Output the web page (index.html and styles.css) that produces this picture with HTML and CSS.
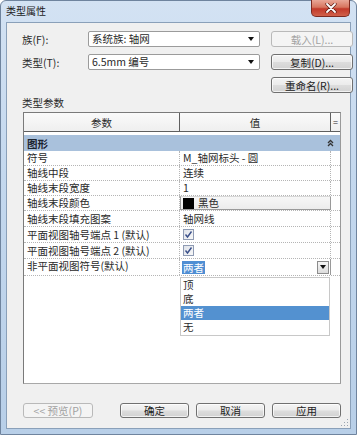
FILE: index.html
```html
<!DOCTYPE html>
<html lang="zh">
<head>
<meta charset="utf-8">
<title>类型属性</title>
<link rel="stylesheet" href="styles.css">
</head>
<body>
<div class="window">
  <div class="titlebar">
    <span class="title">类型属性</span>
    <div class="close">
      <svg width="14" height="10" viewBox="0 0 14 10"><path d="M3 1 L11 9 M11 1 L3 9" stroke="#5a1a12" stroke-width="3.2" stroke-linecap="round"/><path d="M3 1 L11 9 M11 1 L3 9" stroke="#ffffff" stroke-width="1.8" stroke-linecap="round"/></svg>
    </div>
  </div>
  <div class="client">
    <div class="top-grid">
      <span class="lbl">族(F):</span>
      <div class="combo"><span>系统族: 轴网</span><i class="tri"></i></div>
      <button class="btn disabled">载入(L)...</button>

      <span class="lbl">类型(T):</span>
      <div class="combo"><span>6.5mm 编号</span><i class="tri"></i></div>
      <button class="btn">复制(D)...</button>

      <span></span><span></span>
      <button class="btn">重命名(R)...</button>
    </div>

    <div class="section-label">类型参数</div>

    <div class="table">
      <div class="thead">
        <div class="th">参数</div>
        <div class="th">值</div>
        <div class="th eq">=</div>
      </div>
      <div class="tbody">
        <div class="group">
          <span>图形</span>
          <svg class="collapse" width="7" height="8" viewBox="0 0 7 8"><path d="M1 4 L3.5 1.5 L6 4 M1 7 L3.5 4.5 L6 7" stroke="#333" stroke-width="1.3" fill="none"/></svg>
        </div>
        <div class="row"><div class="c1">符号</div><div class="c2">M_轴网标头 - 圆</div><div class="c3"></div></div>
        <div class="row"><div class="c1">轴线中段</div><div class="c2">连续</div><div class="c3"></div></div>
        <div class="row"><div class="c1">轴线末段宽度</div><div class="c2">1</div><div class="c3"></div></div>
        <div class="row"><div class="c1">轴线末段颜色</div><div class="c2 colorcell"><i class="swatch"></i>黑色</div><div class="c3"></div></div>
        <div class="row r16"><div class="c1">轴线末段填充图案</div><div class="c2">轴网线</div><div class="c3"></div></div>
        <div class="row r16"><div class="c1">平面视图轴号端点 1 (默认)</div><div class="c2"><span class="check"><svg width="9" height="9" viewBox="0 0 9 9"><path d="M1.5 4.5 L3.5 7 L7.5 1.5" stroke="#3a4f8a" stroke-width="1.4" fill="none"/></svg></span></div><div class="c3"></div></div>
        <div class="row r16"><div class="c1">平面视图轴号端点 2 (默认)</div><div class="c2"><span class="check"><svg width="9" height="9" viewBox="0 0 9 9"><path d="M1.5 4.5 L3.5 7 L7.5 1.5" stroke="#3a4f8a" stroke-width="1.4" fill="none"/></svg></span></div><div class="c3"></div></div>
        <div class="row tall"><div class="c1">非平面视图符号(默认)</div><div class="c2 editcell"><span class="sel">两者</span><span class="dbtn"><i class="tri"></i></span></div><div class="c3"></div></div>
      </div>
      <ul class="dropdown">
        <li>顶</li>
        <li>底</li>
        <li class="hl">两者</li>
        <li>无</li>
      </ul>
    </div>

    <div class="footer">
      <button class="btn disabled preview">&lt;&lt; 预览(P)</button>
      <div class="actions">
        <button class="btn">确定</button>
        <button class="btn">取消</button>
        <button class="btn">应用</button>
      </div>
    </div>
    <div class="grip"></div>
  </div>
</div>
</body>
</html>
```

FILE: styles.css
```css
* { box-sizing: border-box; }
html, body { margin: 0; padding: 0; }
body {
  width: 357px;
  height: 435px;
  overflow: hidden;
  font-family: "Noto Sans CJK SC", "Liberation Sans", sans-serif;
  font-size: 10.5px;
  color: #2a2a2a;
  background: #fff;
}
.window {
  width: 357px;
  height: 435px;
  background: linear-gradient(180deg, #d3e2f3 0%, #c4d8ee 40%, #b8cfe8 100%);
  border: 1px solid #6f849e;
  border-radius: 6px 6px 0 0;
  position: relative;
  padding: 0 5px 0 5px;
}
.titlebar {
  height: 21px;
  display: flex;
  align-items: center;
  position: relative;
}
.title {
  font-size: 10px;
  color: #1b1b1b;
  margin-top: -2px;
}
.close {
  position: absolute;
  right: 1px;
  top: -1px;
  width: 39px;
  height: 17px;
  border: 1px solid #7d2a20;
  border-top: none;
  border-radius: 0 0 5px 5px;
  background: linear-gradient(180deg, #e9a797 0%, #d7755f 45%, #c2392a 55%, #d0614a 100%);
  display: flex;
  align-items: center;
  justify-content: center;
}
.client {
  height: 407px;
  background: #f0f0f0;
  border: 1px solid #8aa0b9;
  position: relative;
  padding: 8px 9px 0 15px;
}
.top-grid {
  display: grid;
  grid-template-columns: 55px 172px 82px;
  column-gap: 11px;
  grid-template-rows: 16px 16px 16px;
  row-gap: 7px;
  align-items: center;
}
.combo {
  height: 16px;
  background: #fff;
  border: 1px solid #9b9b9b;
  border-radius: 2px;
  display: flex;
  align-items: center;
  justify-content: space-between;
  padding: 0 4px 0 3px;
  line-height: 14px;
}
.tri {
  display: block;
  width: 0;
  height: 0;
  border-left: 3.5px solid transparent;
  border-right: 3.5px solid transparent;
  border-top: 4px solid #111;
}
.combo .tri { margin-right: 1px; }
.btn {
  height: 16px;
  padding: 0;
  font-family: inherit;
  font-size: 10.5px;
  line-height: 13px;
  color: #222;
  border: 1px solid #707070;
  border-radius: 3px;
  background: linear-gradient(180deg, #f4f4f4 0%, #ebebeb 48%, #dddddd 52%, #d2d2d2 100%);
  box-shadow: inset 0 0 0 1px rgba(255,255,255,0.7);
}
.btn.disabled {
  color: #a2a2a2;
  border-color: #b9b9b9;
  background: #f4f4f4;
  box-shadow: none;
}
.section-label {
  margin-top: 3px;
  height: 14px;
  line-height: 14px;
}
.table {
  position: relative;
  margin-top: 2px;
  margin-left: 1px;
  width: 318px;
  height: 272px;
  background: #fff;
  border: 1px solid #7a7a7a;
  border-right-color: #9a9a9a;
  border-bottom-color: #a8a8a8;
}
.thead {
  display: grid;
  grid-template-columns: 156px 151px 9px;
  height: 19px;
  border-bottom: 1px solid #5f5f5f;
  background: linear-gradient(180deg, #fafafa 0%, #efefef 100%);
}
.th {
  display: flex;
  align-items: center;
  justify-content: center;
  border-right: 1px solid #5f5f5f;
}
.th.eq { border-right: none; font-size: 9px; }
.tbody { padding-top: 3px; }
.group {
  height: 16px;
  background: #a9c1dc;
  display: flex;
  align-items: center;
  justify-content: space-between;
  padding: 0 6px 0 3px;
  font-weight: bold;
  color: #1c2430;
}
.row {
  display: grid;
  grid-template-columns: 156px 151px 9px;
  height: 15px;
  border-bottom: 1px dotted #b5b5b5;
}
.row.r16 { height: 16px; }
.row.tall { height: 17px; }
.c1, .c2, .c3 {
  border-right: 1px dotted #b5b5b5;
  line-height: 14px;
  white-space: nowrap;
  overflow: hidden;
}
.c1 { padding-left: 3px; }
.c2 { padding-left: 3px; }
.r16 .c1, .r16 .c2 { line-height: 15px; }
.c3 { border-right: none; }
.colorcell {
  display: flex;
  align-items: center;
  gap: 4px;
  background: linear-gradient(180deg, #f7f7f7, #ececec);
  border: 1px solid #9a9a9a;
  border-top-color: #d8d8d8;
  padding-left: 2px;
}
.swatch {
  display: block;
  width: 11px;
  height: 11px;
  background: #000;
}
.check {
  display: inline-flex;
  width: 11px;
  height: 11px;
  margin-top: 2px;
  border: 1px solid #8f9bb3;
  background: linear-gradient(135deg, #dfe3ea, #f8f8f8);
  align-items: center;
  justify-content: center;
}
.editcell {
  display: flex;
  align-items: center;
  justify-content: space-between;
  padding: 0 1px 0 2px;
  border-right: 1px solid #9a9a9a;
}
.sel {
  background: #4f8ed3;
  color: #fff;
  line-height: 13px;
  padding: 0 1px;
}
.dbtn {
  width: 12px;
  height: 13px;
  border: 1px solid #8c8c8c;
  background: linear-gradient(180deg, #f6f6f6, #dcdcdc);
  display: flex;
  align-items: center;
  justify-content: center;
}
.dropdown {
  position: absolute;
  left: 156px;
  top: 164px;
  width: 150px;
  height: 59px;
  margin: 0;
  padding: 0 0 3px 0;
  list-style: none;
  background: #fff;
  border: 1px solid #c8c8c8;
}
.dropdown li {
  height: 14px;
  line-height: 14px;
  padding-left: 2px;
}
.dropdown li.hl {
  background: #5391d0;
  color: #fff;
}
.footer {
  margin-top: 19px;
  display: flex;
  justify-content: space-between;
  padding-left: 1px;
}
.preview { width: 70px; height: 15px; }
.actions {
  display: flex;
  gap: 7px;
}
.actions .btn { width: 69px; height: 15px; }
.grip {
  position: absolute;
  right: 2px;
  bottom: 2px;
  width: 8px;
  height: 8px;
  background:
    radial-gradient(circle, #9aa4b0 0.8px, transparent 1px) 0 0 / 3px 3px;
  clip-path: polygon(100% 0, 100% 100%, 0 100%);
}
```
